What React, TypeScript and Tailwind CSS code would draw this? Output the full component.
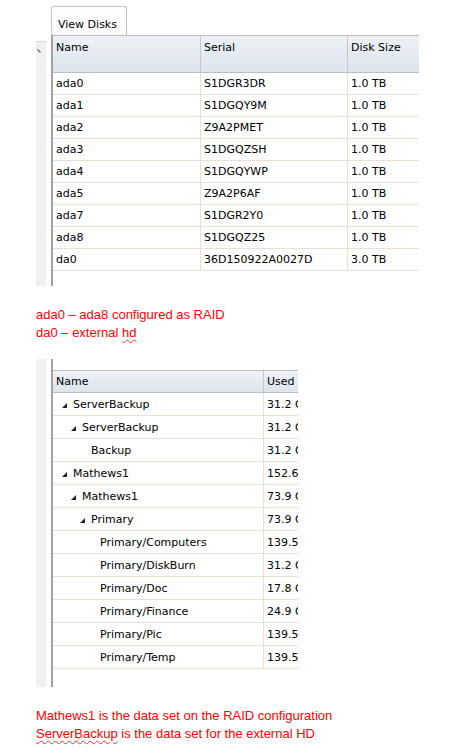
const disks = [
  { name: "ada0", serial: "S1DGR3DR", size: "1.0 TB" },
  { name: "ada1", serial: "S1DGQY9M", size: "1.0 TB" },
  { name: "ada2", serial: "Z9A2PMET", size: "1.0 TB" },
  { name: "ada3", serial: "S1DGQZSH", size: "1.0 TB" },
  { name: "ada4", serial: "S1DGQYWP", size: "1.0 TB" },
  { name: "ada5", serial: "Z9A2P6AF", size: "1.0 TB" },
  { name: "ada7", serial: "S1DGR2Y0", size: "1.0 TB" },
  { name: "ada8", serial: "S1DGQZ25", size: "1.0 TB" },
  { name: "da0", serial: "36D150922A0027D", size: "3.0 TB" },
];

const datasets = [
  { name: "ServerBackup", used: "31.2 GB", level: 0, open: true },
  { name: "ServerBackup", used: "31.2 GB", level: 1, open: true },
  { name: "Backup", used: "31.2 GB", level: 2, open: false },
  { name: "Mathews1", used: "152.6 GB", level: 0, open: true },
  { name: "Mathews1", used: "73.9 GB", level: 1, open: true },
  { name: "Primary", used: "73.9 GB", level: 2, open: true },
  { name: "Primary/Computers", used: "139.5 GB", level: 3, open: false },
  { name: "Primary/DiskBurn", used: "31.2 GB", level: 3, open: false },
  { name: "Primary/Doc", used: "17.8 GB", level: 3, open: false },
  { name: "Primary/Finance", used: "24.9 GB", level: 3, open: false },
  { name: "Primary/Pic", used: "139.5 GB", level: 3, open: false },
  { name: "Primary/Temp", used: "139.5 GB", level: 3, open: false },
];

// tree indent per level
const indent = ["pl-[9px]", "pl-[18px]", "pl-[27px]", "pl-[36px]"];

export default function App() {
  return (
    <div className="h-[752px] w-[462px] overflow-hidden bg-white font-['DejaVu_Sans',Verdana,sans-serif] text-[11px] leading-[13px] text-black">
      {/* tab */}
      <div className="pl-[51px] pt-[6px]">
        <div className="flex h-[29px] w-[76px] items-start rounded-t-[3px] border border-b-0 border-[#c2c2c2] bg-gradient-to-b from-white to-[#fbfbfc] pl-[6px] pt-[11px]">
          View Disks
        </div>
      </div>

      {/* disks panel */}
      <div className="flex h-[251px] pl-[36px]">
        <div className="mt-[6px] w-[10px] border-t border-[#d6d6d6] bg-[#f0f0f0] pl-[1px] pt-[7px]">
          <svg width="4" height="4" viewBox="0 0 4 4">
            <path d="M0.5 0.5 L3.5 3.5" stroke="#6b6b6b" strokeWidth="1.2" />
          </svg>
        </div>
        <div className="w-[5px]" />
        <div className="w-[2px] bg-[#a2a2a2]" />
        <div className="w-[366px]">
          <div className="flex h-[38px] border-y border-[#bdbdbd] bg-gradient-to-b from-[#eef2f7] to-[#dce4ed]">
            <div className="w-[148px] border-r border-[#c4c8cd] pl-[3px] pt-[5px]">Name</div>
            <div className="w-[147px] border-r border-[#c4c8cd] pl-[3px] pt-[5px]">Serial</div>
            <div className="flex-1 pl-[3px] pt-[5px]">Disk Size</div>
          </div>
          {disks.map((d) => (
            <div key={d.name} className="flex h-[22px] border-b border-[#eddfd0]">
              <div className="flex w-[148px] items-center border-r border-[#eddfd0] pl-[3px]">{d.name}</div>
              <div className="flex w-[147px] items-center border-r border-[#eddfd0] pl-[3px]">{d.serial}</div>
              <div className="flex flex-1 items-center pl-[3px]">{d.size}</div>
            </div>
          ))}
        </div>
      </div>

      <div className="mt-[20px] pl-[36px] font-['Liberation_Sans',Arial,sans-serif] text-[13px] leading-[18px] text-[#ff0000]">
        <p>ada0 – ada8 configured as RAID</p>
        <p>
          da0 – external <span className="underline decoration-[#d43a3a] decoration-wavy decoration-1 underline-offset-2">hd</span>
        </p>
      </div>

      {/* datasets panel */}
      <div className="mt-[17px] flex h-[328px] pl-[36px]">
        <div className="w-[10px] bg-[#f0f0f0]" />
        <div className="w-[5px]" />
        <div className="w-[2px] bg-[#a2a2a2]" />
        <div className="w-[245px] pt-[11px]">
          <div className="flex h-[23px] border-y border-[#bdbdbd] bg-gradient-to-b from-[#eef2f7] to-[#dce4ed]">
            <div className="flex w-[211px] items-center border-r border-[#c4c8cd] pl-[3px]">Name</div>
            <div className="flex flex-1 items-center overflow-hidden whitespace-nowrap pl-[3px]">Used</div>
          </div>
          {datasets.map((r, i) => (
            <div key={i} className="flex h-[23px] border-b border-[#eddfd0]">
              <div className={`flex w-[211px] items-center border-r border-[#eddfd0] ${indent[r.level]}`}>
                <span className="flex w-[11px] items-center pt-[2px]">
                  {r.open && (
                    <svg width="5" height="5" viewBox="0 0 5 5">
                      <polygon points="5,0 5,5 0,5" fill="#222" />
                    </svg>
                  )}
                </span>
                <span>{r.name}</span>
              </div>
              <div className="flex flex-1 items-center overflow-hidden whitespace-nowrap pl-[3px]">{r.used}</div>
            </div>
          ))}
        </div>
      </div>

      <div className="mt-[20px] pl-[36px] font-['Liberation_Sans',Arial,sans-serif] text-[13px] leading-[18px] text-[#ff0000]">
        <p>Mathews1 is the data set on the RAID configuration</p>
        <p>
          <span className="underline decoration-[#d43a3a] decoration-wavy decoration-1 underline-offset-2">ServerBackup</span> is the data set for the external HD
        </p>
      </div>
    </div>
  );
}
